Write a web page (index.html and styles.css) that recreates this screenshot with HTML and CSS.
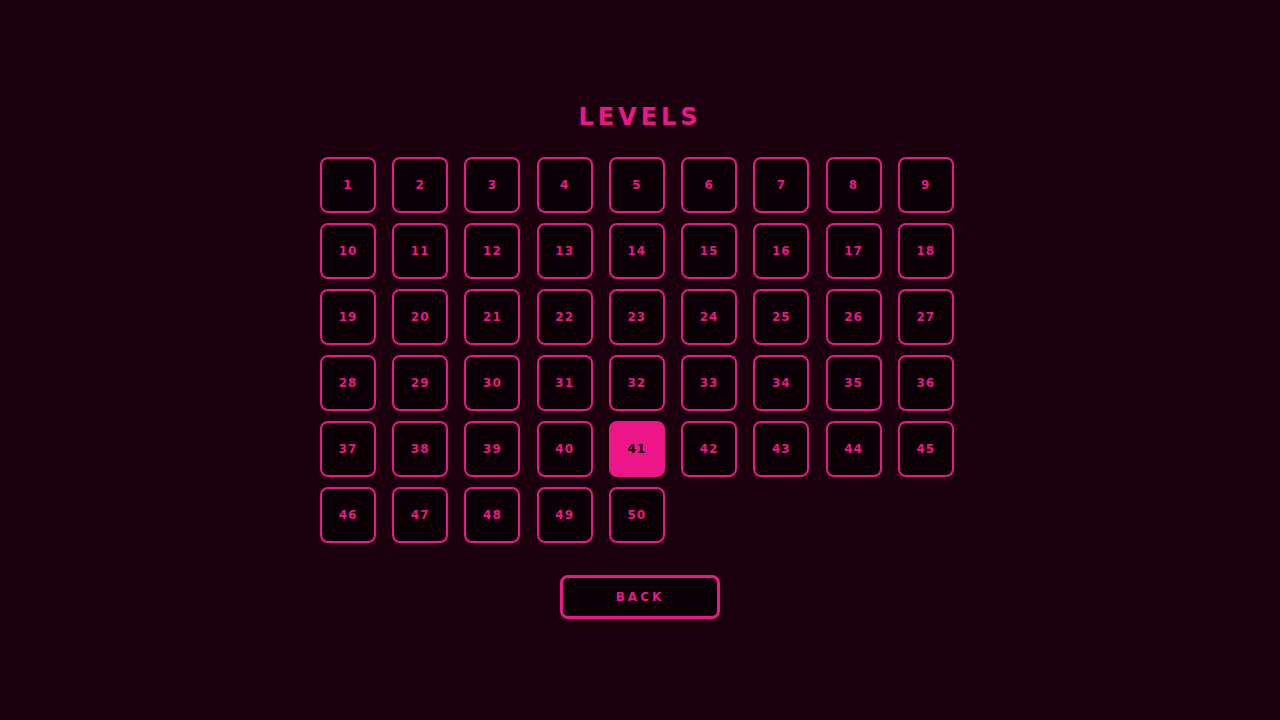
FILE: index.html
```html
<!DOCTYPE html>
<html lang="en">
<head>
<meta charset="utf-8">
<meta name="viewport" content="width=device-width, initial-scale=1">
<title>Levels</title>
<link rel="stylesheet" href="styles.css">
</head>
<body>
<main class="screen">
<h1 class="title">LEVELS</h1>
<div class="levels">
<button class="level">1</button>
<button class="level">2</button>
<button class="level">3</button>
<button class="level">4</button>
<button class="level">5</button>
<button class="level">6</button>
<button class="level">7</button>
<button class="level">8</button>
<button class="level">9</button>
<button class="level">10</button>
<button class="level">11</button>
<button class="level">12</button>
<button class="level">13</button>
<button class="level">14</button>
<button class="level">15</button>
<button class="level">16</button>
<button class="level">17</button>
<button class="level">18</button>
<button class="level">19</button>
<button class="level">20</button>
<button class="level">21</button>
<button class="level">22</button>
<button class="level">23</button>
<button class="level">24</button>
<button class="level">25</button>
<button class="level">26</button>
<button class="level">27</button>
<button class="level">28</button>
<button class="level">29</button>
<button class="level">30</button>
<button class="level">31</button>
<button class="level">32</button>
<button class="level">33</button>
<button class="level">34</button>
<button class="level">35</button>
<button class="level">36</button>
<button class="level">37</button>
<button class="level">38</button>
<button class="level">39</button>
<button class="level">40</button>
<button class="level level-current" aria-current="true">41</button>
<button class="level">42</button>
<button class="level">43</button>
<button class="level">44</button>
<button class="level">45</button>
<button class="level">46</button>
<button class="level">47</button>
<button class="level">48</button>
<button class="level">49</button>
<button class="level">50</button>
</div>
<button class="back">BACK</button>
</main>
</body>
</html>
```

FILE: styles.css
```css
:root {
  --pink: #ed1688;
  --page: #1a000d;
  --panel: #0b0005;
}

* {
  box-sizing: border-box;
}

body {
  margin: 0;
  background: var(--page);
  color: var(--pink);
  font-family: "DejaVu Sans", sans-serif;
}

.screen {
  display: flex;
  flex-direction: column;
  align-items: center;
  justify-content: center;
  min-height: 100vh;
}

.title {
  margin: 0 0 24px;
  font-size: 24px;
  line-height: 32px;
  letter-spacing: 4px;
}

.levels {
  display: grid;
  grid-template-columns: repeat(9, 1fr);
  gap: 10px;
  width: 100%;
  max-width: 640px;
  margin-bottom: 32px;
}

.level,
.back {
  padding: 0;
  border: 2px solid var(--pink);
  border-radius: 8px;
  background: var(--panel);
  color: inherit;
  font: bold 12px/16px "DejaVu Sans", sans-serif;
  cursor: pointer;
}

.level {
  width: 56px;
  height: 56px;
  letter-spacing: 1px;
}

.level-current {
  background: var(--pink);
  color: var(--panel);
}

.back {
  width: 160px;
  height: 44px;
  border-width: 3px;
  letter-spacing: 3px;
}
```
